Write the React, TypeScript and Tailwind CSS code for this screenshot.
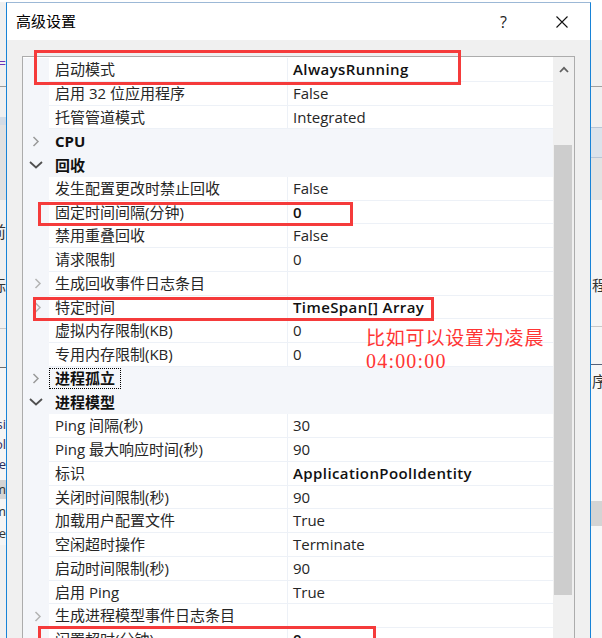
import React from "react";

type Row = {
  label: string;
  value?: string;
  bold?: boolean;
  cat?: boolean;
  open?: boolean;
  sub?: boolean;
  focus?: boolean;
};

const rows: Row[] = [
  { label: "启动模式", value: "AlwaysRunning", bold: true },
  { label: "启用 32 位应用程序", value: "False" },
  { label: "托管管道模式", value: "Integrated" },
  { label: "CPU", cat: true },
  { label: "回收", cat: true, open: true },
  { label: "发生配置更改时禁止回收", value: "False" },
  { label: "固定时间间隔(分钟)", value: "0", bold: true },
  { label: "禁用重叠回收", value: "False" },
  { label: "请求限制", value: "0" },
  { label: "生成回收事件日志条目", value: "", sub: true },
  { label: "特定时间", value: "TimeSpan[] Array", bold: true, sub: true },
  { label: "虚拟内存限制(KB)", value: "0" },
  { label: "专用内存限制(KB)", value: "0" },
  { label: "进程孤立", cat: true, focus: true },
  { label: "进程模型", cat: true, open: true },
  { label: "Ping 间隔(秒)", value: "30" },
  { label: "Ping 最大响应时间(秒)", value: "90" },
  { label: "标识", value: "ApplicationPoolIdentity", bold: true },
  { label: "关闭时间限制(秒)", value: "90" },
  { label: "加载用户配置文件", value: "True" },
  { label: "空闲超时操作", value: "Terminate" },
  { label: "启动时间限制(秒)", value: "90" },
  { label: "启用 Ping", value: "True" },
  { label: "生成进程模型事件日志条目", value: "", sub: true },
  { label: "闲置超时(分钟)", value: "0", bold: true },
];

function ChevronRight({ color }: { color: string }) {
  return (
    <svg width="8" height="11" viewBox="0 0 8 11">
      <path d="M1.5 1 L6 5.5 L1.5 10" stroke={color} strokeWidth="1.5" fill="none" />
    </svg>
  );
}

function ChevronDown() {
  return (
    <svg width="14" height="8" viewBox="0 0 14 8">
      <path d="M1 1 L7 6.5 L13 1" stroke="#505050" strokeWidth="1.8" fill="none" />
    </svg>
  );
}

function GridRow({ row }: { row: Row }) {
  if (row.cat) {
    return (
      <div className="flex h-[23.75px] shrink-0 items-center bg-[#f4f6fa]">
        <div className="flex w-[26px] shrink-0 items-center justify-center">
          {row.open ? <ChevronDown /> : <ChevronRight color="#9a9a9a" />}
        </div>
        {row.focus ? (
          <span className="flex h-[21px] items-center border border-dotted border-black px-[5px] text-[15px] font-bold text-[#111]">
            {row.label}
          </span>
        ) : (
          <span className="pl-[6px] text-[15px] font-bold text-[#111]">{row.label}</span>
        )}
      </div>
    );
  }
  return (
    <div className="flex h-[23.75px] shrink-0">
      <div className="flex w-[26px] shrink-0 items-center justify-center bg-[#f4f6fa] pl-[3px]">
        {row.sub && <ChevronRight color="#b4b4b4" />}
      </div>
      <div className="flex w-[239px] shrink-0 items-center border-r border-b border-[#edf1f7] bg-white pl-[6px] text-[15px] text-[#262626]">
        {row.label}
      </div>
      <div
        className={`flex flex-1 items-center border-b border-[#edf1f7] bg-white pl-[5px] text-[15px] ${
          row.bold ? "font-semibold tracking-[0.4px] text-[#111]" : "text-[#262626]"
        }`}
      >
        {row.value}
      </div>
    </div>
  );
}

function LeftStrip() {
  return (
    <div className="flex w-[6px] shrink-0 flex-col overflow-hidden text-[13px] leading-none">
      <div className="h-[2px] bg-white" />
      <div className="relative h-[84px] bg-[#f0f0f0]">
        <span className="absolute right-0 top-[55px] text-[#6a35b8]">=</span>
      </div>
      <div className="h-[1px] bg-[#9a9a9a]" />
      <div className="h-[30px] bg-[#f0f0f0]" />
      <div className="h-[8px] bg-[#d3dbe5]" />
      <div className="h-[75px] bg-[#e1e1e1]" />
      <div className="flex h-[128px] flex-col items-end bg-[#f0f0f0] pt-[24px] text-[#333]">
        <span className="text-[16px]">前</span>
        <span className="mt-[38px] text-[15px]">标</span>
      </div>
      <div className="h-[1px] bg-[#c8c8c8]" />
      <div className="h-[38px] bg-[#f0f0f0]" />
      <div className="h-[1px] bg-[#6d6d6d]" />
      <div className="flex h-[112px] flex-col items-end gap-[7px] bg-[#f5f5f5] pt-[50px] text-[#2a2a5a]">
        <span>si</span>
        <span>ol</span>
        <span>e</span>
      </div>
      <div className="flex h-[19px] items-center justify-end bg-[#d4d4d4] text-[#333]">m</div>
      <div className="flex h-[46px] flex-col items-end gap-[9px] bg-[#f5f5f5] pt-[6px] text-[#333]">
        <span>m</span>
        <span>e</span>
      </div>
      <div className="flex-1 bg-[#f0f0f0]" />
    </div>
  );
}

function RightStrip() {
  return (
    <div className="flex flex-1 flex-col overflow-hidden text-[15px] leading-none text-[#333]">
      <div className="h-[40px] bg-white" />
      <div className="h-[46px] bg-[#f0f0f0]" />
      <div className="h-[1px] bg-[#a0a0a0]" />
      <div className="h-[40px] bg-[#f0f0f0]" />
      <div className="h-[31px] border-y border-[#b9c6d6] bg-[#dce3eb]" />
      <div className="h-[42px] bg-[#e3e3e3]" />
      <div className="h-[126px] bg-[#f5f5f5] pt-[78px] pl-[1px]">
        <span>程</span>
      </div>
      <div className="h-[1px] bg-[#c8c8c8]" />
      <div className="h-[37px] bg-[#f5f5f5]" />
      <div className="h-[1px] bg-[#55627a]" />
      <div className="h-[136px] bg-[#f7f7f7] pt-[9px] pl-[1px]">
        <span>序</span>
      </div>
      <div className="h-[25px] bg-[#d4d4d4]" />
      <div className="flex-1 bg-[#f7f7f7]" />
    </div>
  );
}

export default function App() {
  return (
    <div className="relative flex h-[638px] w-[602px] overflow-hidden bg-white font-['Open_Sans','Noto_Sans_CJK_SC',sans-serif]">
      <LeftStrip />

      {/* dialog */}
      <div className="flex w-[585px] shrink-0 flex-col pt-[2px]">
        <div className="flex flex-1 flex-col border-x border-t border-x-[#1883d7] border-t-[#9cb8d6]">
          {/* title bar */}
          <div className="flex h-[37px] shrink-0 items-center bg-white pl-[9px] pr-[22px]">
            <span className="font-['Noto_Sans_CJK_SC',sans-serif] text-[15px] text-black">高级设置</span>
            <span className="ml-auto text-[16px] text-[#222]">?</span>
            <svg className="ml-[49px]" width="12" height="12" viewBox="0 0 12 12">
              <path d="M0.5 0.5 L11.5 11.5 M11.5 0.5 L0.5 11.5" stroke="#111" strokeWidth="1.1" />
            </svg>
          </div>

          {/* body */}
          <div className="flex flex-1 flex-col bg-[#f0f0f0] px-[15px] pt-[16px]">
            <div className="flex flex-1 border border-[#acacac] bg-white">
              <div className="flex flex-1 flex-col overflow-hidden pt-[1px]">
                {rows.map((r, i) => (
                  <GridRow key={i} row={r} />
                ))}
              </div>
              {/* scrollbar */}
              <div className="flex w-[21px] shrink-0 flex-col bg-[#f0f0f0]">
                <div className="flex h-[24px] items-center justify-center pl-[1px]">
                  <svg width="10" height="7" viewBox="0 0 10 7">
                    <path d="M1 6 L5 1.8 L9 6" stroke="#606060" strokeWidth="1.8" fill="none" />
                  </svg>
                </div>
                <div className="ml-[1px] mt-[64px] h-[450px] w-[18px] bg-[#cdcdcd]" />
              </div>
            </div>
          </div>
        </div>
      </div>

      <RightStrip />

      {/* annotation boxes */}
      <div className="absolute left-[34px] top-[50px] h-[35px] w-[427px] border-[3px] border-[#f53b3b]" />
      <div className="absolute left-[38px] top-[202px] h-[24px] w-[315px] border-[3px] border-[#f53b3b]" />
      <div className="absolute left-[33px] top-[297px] h-[24px] w-[401px] border-[3px] border-[#f53b3b]" />
      <div className="absolute left-[38px] top-[626px] h-[30px] w-[338px] border-[3px] border-[#f53b3b]" />

      {/* annotation text */}
      <div className="absolute left-[366px] top-[325px] text-[#ff3535]">
        <div className="font-['Noto_Sans_CJK_SC',sans-serif] text-[19px] leading-[24px] tracking-[0.8px]">
          比如可以设置为凌晨
        </div>
        <div className="font-['Liberation_Serif',serif] text-[20px] leading-[24px] tracking-[1.2px]">04:00:00</div>
      </div>
    </div>
  );
}
